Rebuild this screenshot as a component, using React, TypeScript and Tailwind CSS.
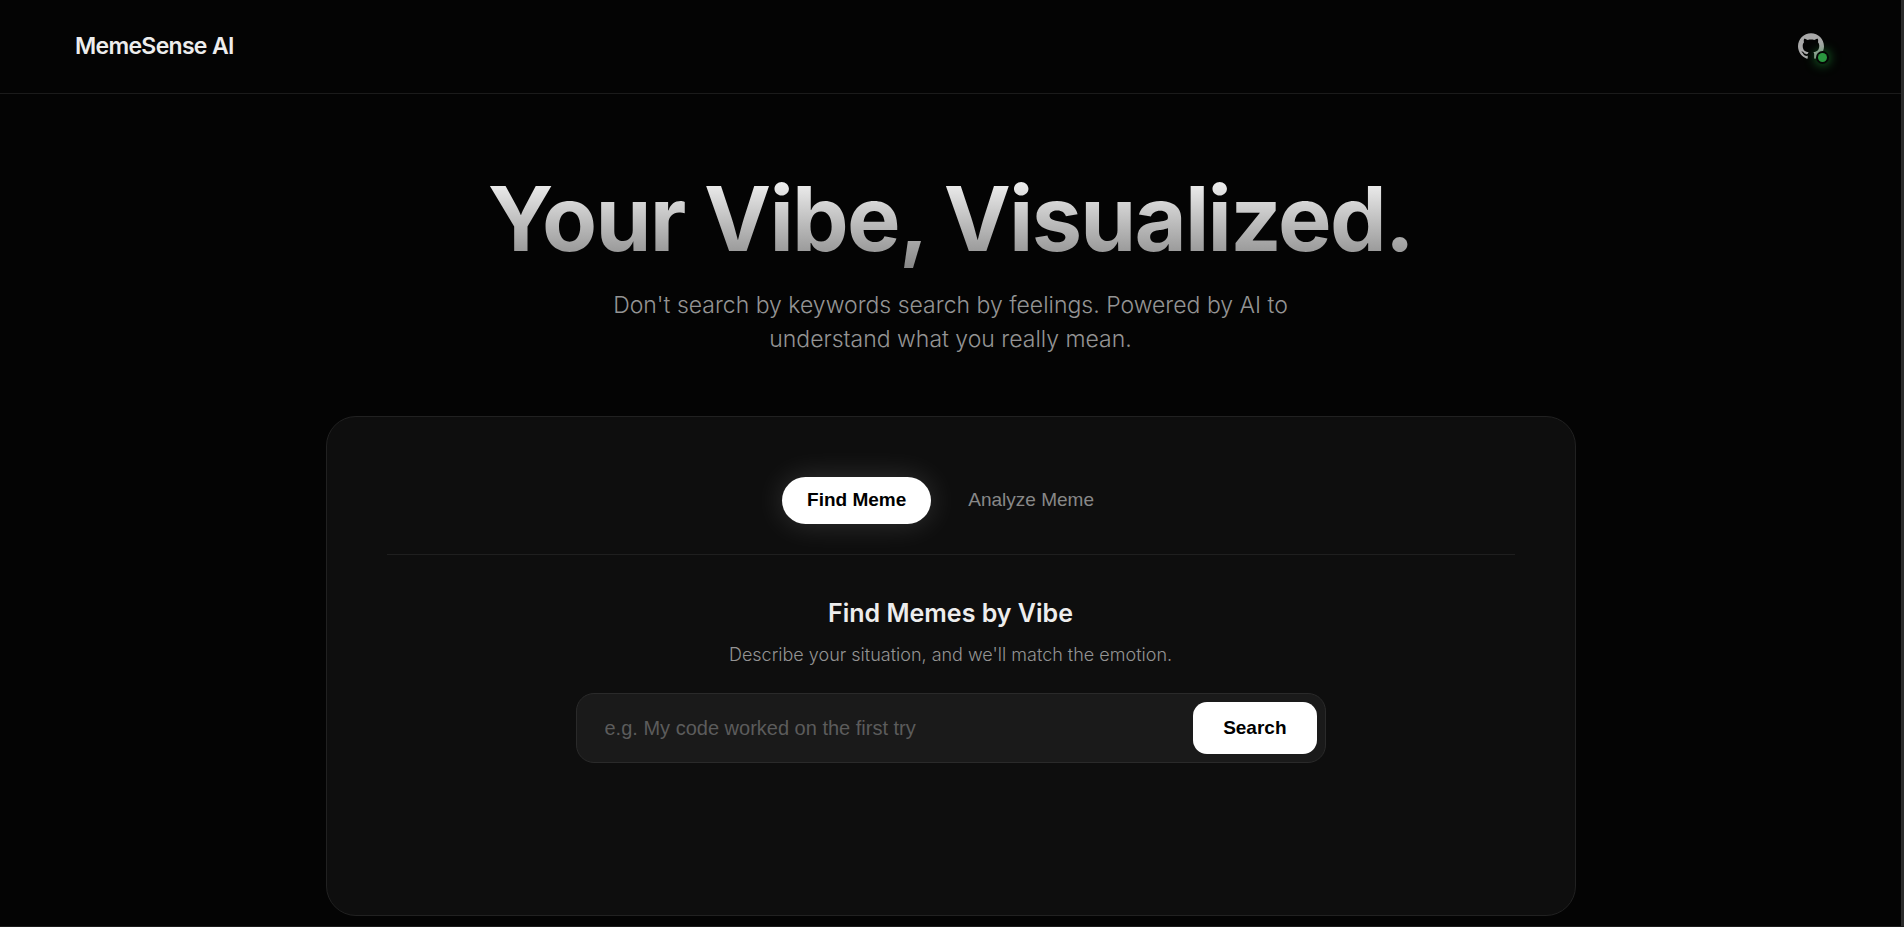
import { useState } from 'react';
import type { FormEvent } from 'react';
import { SiGithub } from 'react-icons/si';

type Tab = 'find' | 'analyze';

const TABS: { key: Tab; label: string }[] = [
  { key: 'find', label: 'Find Meme' },
  { key: 'analyze', label: 'Analyze Meme' },
];

const COPY = {
  find: {
    title: 'Find Memes by Vibe',
    subtitle: "Describe your situation, and we'll match the emotion.",
  },
  analyze: {
    title: 'Analyze a Meme',
    subtitle: "Paste a link, and we'll explain the emotion.",
  },
};

function Header() {
  return (
    <header className="flex items-center justify-between border-b border-[#1b1b1b] py-8 pr-[77px] pl-[75px]">
      <span className="text-[23px] leading-[29px] font-semibold tracking-[-0.03em] text-[#ededed]">MemeSense AI</span>
      <a href="https://github.com" aria-label="GitHub" className="relative block pb-0.5 text-[#a9a9a9]">
        <SiGithub size={26} />
        <span className="absolute -right-[3px] -bottom-px size-[9px] rounded-full bg-[#2a973f] shadow-[0_0_0_2px_#050505,0_0_12px_2px_#1c8a33]" />
      </a>
    </header>
  );
}

function Hero() {
  return (
    <section className="text-center">
      <h1 className="bg-linear-to-b from-white to-[#888888] bg-clip-text text-[90px] leading-[99px] font-bold tracking-[-0.02em] text-transparent">
        Your Vibe, Visualized.
      </h1>
      <p className="mx-auto mt-5 max-w-[700px] text-[23px] leading-[34px] font-light text-[#949494]">
        Don't search by keywords search by feelings. Powered by AI to understand what you really mean.
      </p>
    </section>
  );
}

export default function App() {
  const [tab, setTab] = useState<Tab>('find');
  const [query, setQuery] = useState('');

  const handleSubmit = (e: FormEvent) => {
    e.preventDefault();
  };

  return (
    <div className="flex min-h-screen border-b border-[#1c1c1c] bg-[#040404] font-['Inter',sans-serif]">
      <div className="min-w-0 flex-1">
        <Header />

        <main className="px-6 pt-[75px] pb-[10px]">
          <Hero />

          <div className="mx-auto mt-[60px] min-h-[500px] max-w-[1250px] rounded-[30px] border border-[#212121] bg-[#0e0e0e] p-[60px]">
            <div className="flex justify-center gap-3 border-b border-[#1f1f1f] pb-[30px]">
              {TABS.map(t => (
                <button
                  key={t.key}
                  type="button"
                  onClick={() => setTab(t.key)}
                  className={`h-[47px] rounded-full px-[25px] pb-0.5 font-['Liberation_Sans',sans-serif] text-[19px] leading-5 ${
                    tab === t.key
                      ? 'bg-white font-bold text-black shadow-[0_0_30px_rgba(255,255,255,0.15)]'
                      : 'text-[#888888]'
                  }`}
                >
                  {t.label}
                </button>
              ))}
            </div>

            <div className="pt-10 text-center">
              <h2 className="text-[25px] leading-9 font-semibold text-[#ededed]">{COPY[tab].title}</h2>
              <p className="mt-[10px] text-lg leading-7 font-light text-[#949494]">{COPY[tab].subtitle}</p>

              <form
                onSubmit={handleSubmit}
                className="mx-auto mt-6 flex max-w-[750px] rounded-[18px] border border-[#2a2a2a] bg-[#1a1a1a] p-2 font-['Liberation_Sans',sans-serif]"
              >
                <input
                  type="text"
                  aria-label="Describe your vibe"
                  value={query}
                  onChange={e => setQuery(e.target.value)}
                  placeholder="e.g. My code worked on the first try"
                  className="min-w-0 flex-1 bg-transparent px-5 text-xl text-[#ededed] outline-none placeholder:text-[#5c5c5c]"
                />
                <button type="submit" className="h-[52px] rounded-[14px] bg-white px-[30px] text-[19px] font-bold text-black">
                  Search
                </button>
              </form>
            </div>
          </div>
        </main>
      </div>

      {/* slim scrollbar track */}
      <div className="w-[3px] shrink-0 bg-[#2b2b2b]" />
    </div>
  );
}
